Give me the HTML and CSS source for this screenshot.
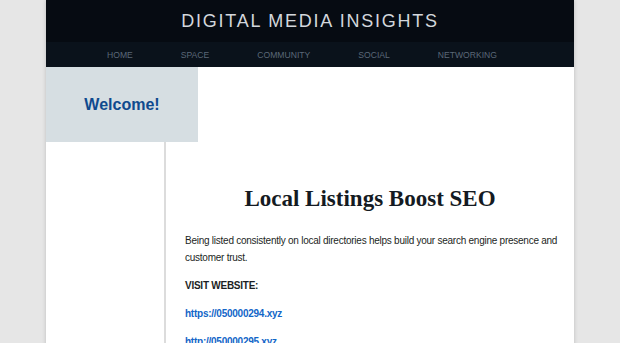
FILE: index.html
```html
<!DOCTYPE html>
<html lang="en">
<head>
  <meta charset="UTF-8" />
  <meta name="viewport" content="width=device-width, initial-scale=1.0"/>
  <title>Digital Media Insights</title>
  <link rel="stylesheet" href="styles.css">
</head>
<body>
  <div class="container">
    <header class="site-header">
      <div class="site-title">DIGITAL MEDIA INSIGHTS</div>
      <nav class="nav">
        <a href="#">HOME</a>
        <a href="#">SPACE</a>
        <a href="#">COMMUNITY</a>
        <a href="#">SOCIAL</a>
        <a href="#">NETWORKING</a>
      </nav>
    </header>

    <div class="welcome">Welcome!</div>

    <div class="layout">
      <aside class="sidebar"></aside>
      <main class="content">
        <h1>Local Listings Boost SEO</h1>
        <p>Being listed consistently on local directories helps build your search engine presence and customer trust.</p>
        <p><strong>VISIT WEBSITE:</strong></p>
        <p><a href="#">https://050000294.xyz</a></p>
        <p><a href="#">http://050000295.xyz</a></p>
      </main>
    </div>
  </div>
</body>
</html>
```

FILE: styles.css
```css
:root {
  --header-bg: #060b12;
  --nav-bg: #0a121b;
  --nav-text: #5b6878;
  --title-text: #d3d7dc;
  --welcome-bg: #d6dee2;
  --welcome-text: #0f4a8e;
  --line-color: #dcdcdc;
  --text-color: #1c1f24;
  --link-color: #1266c8;
  --page-bg: #e6e6e6;
}
body {
  margin: 0;
  background-color: var(--page-bg);
  font-family: 'Liberation Sans', Arial, sans-serif;
  color: var(--text-color);
}
.container {
  width: 528px;
  margin: 0 auto;
  min-height: 343px;
  background-color: #ffffff;
  box-shadow: 0 0 4px rgba(0,0,0,0.18);
}
.site-header {
  background-color: var(--header-bg);
}
.site-title {
  height: 42px;
  line-height: 42px;
  text-align: center;
  color: var(--title-text);
  font-size: 18px;
  letter-spacing: 1.75px;
}
.nav {
  display: flex;
  justify-content: center;
  height: 25px;
  align-items: center;
  background-color: var(--nav-bg);
  padding-right: 16px;
}
.nav a {
  color: var(--nav-text);
  text-decoration: none;
  font-size: 8.6px;
  padding: 0 24px;
}
.welcome {
  width: 152px;
  height: 75px;
  line-height: 75px;
  text-align: center;
  background-color: var(--welcome-bg);
  color: var(--welcome-text);
  font-size: 16px;
  font-weight: bold;
}
.layout {
  display: flex;
}
.sidebar {
  width: 118px;
  border-right: 2px solid var(--line-color);
}
.content {
  flex: 1;
  padding: 43px 8px 0 19px;
  font-size: 10px;
  letter-spacing: -0.25px;
  line-height: 17px;
}
.content h1 {
  font-family: 'Liberation Serif', 'Times New Roman', serif;
  font-size: 23px;
  letter-spacing: 0;
  line-height: 28px;
  text-align: center;
  margin: 0 0 19px 0;
  padding-right: 11px;
  color: #141a22;
}
.content p {
  margin: 0 0 11px 0;
}
.content a {
  color: var(--link-color);
  font-weight: bold;
  text-decoration: none;
}
```
